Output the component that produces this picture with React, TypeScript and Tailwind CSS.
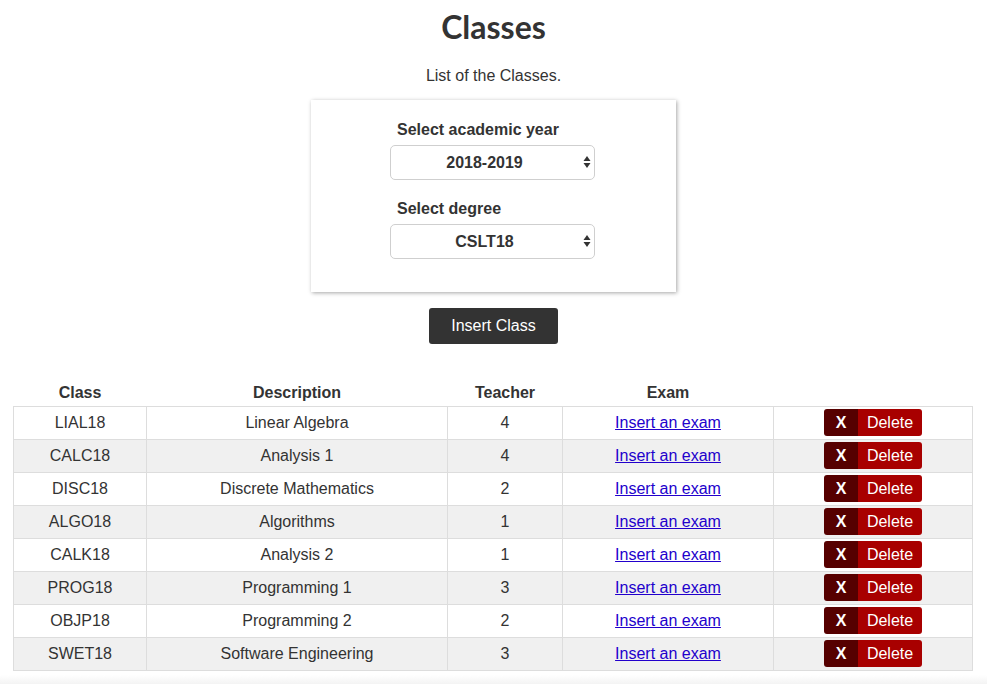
import { useState } from "react";

const ROWS = [
  { code: "LIAL18", desc: "Linear Algebra", teacher: 4 },
  { code: "CALC18", desc: "Analysis 1", teacher: 4 },
  { code: "DISC18", desc: "Discrete Mathematics", teacher: 2 },
  { code: "ALGO18", desc: "Algorithms", teacher: 1 },
  { code: "CALK18", desc: "Analysis 2", teacher: 1 },
  { code: "PROG18", desc: "Programming 1", teacher: 3 },
  { code: "OBJP18", desc: "Programming 2", teacher: 2 },
  { code: "SWET18", desc: "Software Engineering", teacher: 3 },
];

function Select({ value, options, onChange }: { value: string; options: string[]; onChange: (v: string) => void }) {
  return (
    <div className="relative w-[205px] h-[35px]">
      <select
        value={value}
        onChange={(e) => onChange(e.target.value)}
        className="appearance-none w-full h-full rounded-[5px] border border-[#cfcfcf] bg-white text-center font-bold text-[16px] text-[#333] pr-4"
      >
        {options.map((o) => (
          <option key={o}>{o}</option>
        ))}
      </select>
      {/* up/down arrows */}
      <svg className="absolute right-[4px] top-[10px] pointer-events-none" width="8" height="14" viewBox="0 0 8 14">
        <path d="M4 1 L7.5 6 L0.5 6 Z" fill="#333" />
        <path d="M4 13 L7.5 8 L0.5 8 Z" fill="#333" />
      </svg>
    </div>
  );
}

export default function App() {
  const [year, setYear] = useState("2018-2019");
  const [degree, setDegree] = useState("CSLT18");
  const [rows, setRows] = useState(ROWS);

  return (
    <div className="min-h-[684px] bg-white text-[#333] font-['Liberation_Sans',Arial,sans-serif]">
      <h1 className="pt-[8px] text-center text-[32px] leading-[38px] font-bold font-['Lato',sans-serif] text-[#333]">Classes</h1>
      <p className="mt-[20px] text-center text-[16px] leading-[20px]">List of the Classes.</p>

      {/* ── filters card ── */}
      <div className="mx-auto mt-[14px] w-[365px] h-[192px] bg-white shadow-[1px_1px_4px_rgba(0,0,0,0.35)] flex flex-col items-center pt-[20px] pr-[2px]">
        <div className="w-[205px]">
          <label className="block pl-[7px] text-[16px] font-bold leading-[20px] mb-[5px]">Select academic year</label>
          <Select value={year} options={["2018-2019", "2017-2018"]} onChange={setYear} />
          <label className="block pl-[7px] mt-[19px] text-[16px] font-bold leading-[20px] mb-[5px]">Select degree</label>
          <Select value={degree} options={["CSLT18", "CSMS18"]} onChange={setDegree} />
        </div>
      </div>

      <div className="flex justify-center mt-[16px]">
        <button className="w-[129px] h-[36px] rounded-[3px] bg-[#333] text-white text-[16px]">Insert Class</button>
      </div>

      {/* ── classes table ── */}
      <table className="ml-[13px] mt-[36px] w-[959px] border-collapse text-[16px] table-fixed">
        <colgroup>
          <col className="w-[133px]" />
          <col className="w-[301px]" />
          <col className="w-[115px]" />
          <col className="w-[211px]" />
          <col className="w-[199px]" />
        </colgroup>
        <thead>
          <tr className="h-[26px]">
            <th className="font-bold align-middle">Class</th>
            <th className="font-bold align-middle">Description</th>
            <th className="font-bold align-middle">Teacher</th>
            <th className="font-bold align-middle">Exam</th>
            <th></th>
          </tr>
        </thead>
        <tbody>
          {rows.map((r, i) => (
            <tr key={r.code} className={`h-[33px] ${i % 2 === 1 ? "bg-[#f0f0f0]" : "bg-white"}`}>
              <td className="border border-[#dddddd] text-center">{r.code}</td>
              <td className="border border-[#dddddd] text-center">{r.desc}</td>
              <td className="border border-[#dddddd] text-center">{r.teacher}</td>
              <td className="border border-[#dddddd] text-center">
                <a href="#" className="text-[#2200cc] underline">Insert an exam</a>
              </td>
              <td className="border border-[#dddddd] text-center">
                <button
                  onClick={() => setRows((rs) => rs.filter((x) => x.code !== r.code))}
                  className="inline-flex h-[27px] rounded-[3px] overflow-hidden align-middle text-white text-[16px]"
                >
                  <span className="w-[34px] bg-[#560000] flex items-center justify-center font-bold">X</span>
                  <span className="w-[64px] bg-[#a80000] flex items-center justify-center">Delete</span>
                </button>
              </td>
            </tr>
          ))}
        </tbody>
      </table>

      {/* faint page fade at the bottom */}
      <div className="mt-[4px] h-[10px] bg-gradient-to-b from-white to-[#f2f2f2]" />
    </div>
  );
}
